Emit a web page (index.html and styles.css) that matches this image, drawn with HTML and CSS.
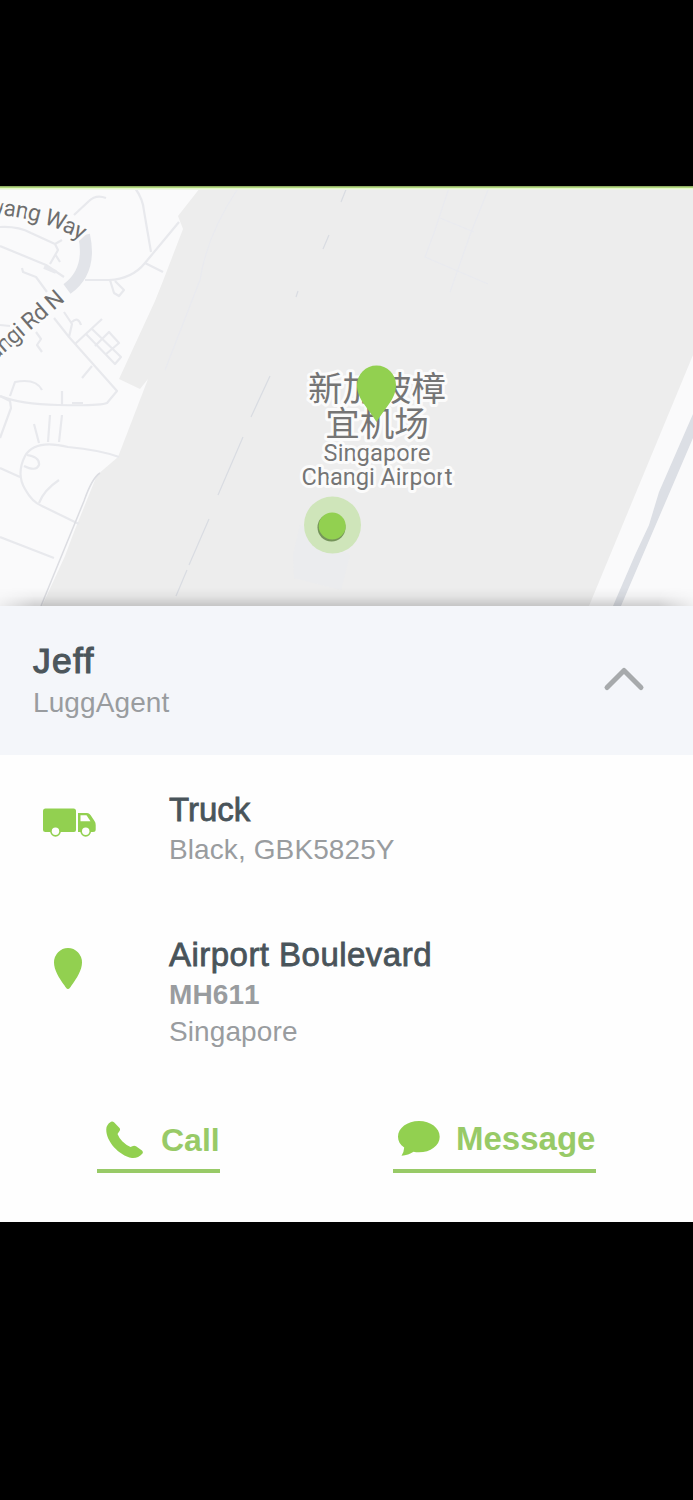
FILE: index.html
```html
<!DOCTYPE html>
<html lang="en">
<head>
<meta charset="utf-8">
<title>LuggAgent</title>
<link rel="stylesheet" href="styles.css">
</head>
<body>
<main class="screen">
  <section class="map">
    <svg class="map-canvas" viewBox="0 186 693 420" width="693" height="420">
      <defs>
        <path id="way" d="M-7 215 Q 44 216 92 247"/>
        <path id="road" d="M-5 361 L 85 283.500"/>
      </defs>
      <rect y="186" width="693" height="420" fill="#fafafb"/>
      <!-- airport grounds -->
      <path d="M200 188 L178 216 L183 229 L163 281 L155 301 L119 379 L140 389 L148 379 L118 457 L97 475 L74 532 L65 556 L42 606 H589 L693 355 V188Z" fill="#ededed"/>
      <g class="road">
        <path d="M0 227 Q18 226 31 233 L55 244 L58 250 L50 264 M0 246 L46 265 L64 277 M55 244 L62 240 M55 254 L60 262 M22 268 L23 272 L36 277 L47 292"/>
        <path d="M74 215 L89 201 Q96 194 106 198 M135 188 Q143 199 144 211 L151 252 M179 222 L145 263 Q132 279 109 280 H85 M145 263 L163 272"/>
        <path d="M110 280 L114 293 L119 296 L124 290 L115 281"/>
        <path d="M54 318 L69 337 L117 391 L107 403 Q100 406 58 405 Q20 404 0 396 M64 312 L72 324 L69 337 M72 322 Q78 316 81 325 M75 344 L102 319 M86 334 L115 364 L121 357 L92 329 M95 346 L109 332 L119 343 L105 355 M92 366 L82 378"/>
        <path d="M36 332 L41 339 L37 345 L42 352 M0 325 L10 326 M10 396 L15 382 Q36 378 42 390 M0 396 L10 401 L11 408 L0 438 M62 391 V405 M72 403 H83"/>
        <path d="M119 457 Q100 450 68 447 Q35 439 25 456 Q16 474 25 489 Q32 502 42 506 L79 524 M39 503 Q44 490 59 480 M27 455 Q40 457 39 465 Q36 472 24 466 M39 443 L34 424 M48 442 L50 415 M59 442 L62 415 M0 468 L20 477 M0 537 L54 558"/>
      </g>
      <path d="M84 235 Q92 271 67 289" class="road-wide"/>
      <path d="M44 267 L56 272" stroke="#e9eaee" stroke-width="4"/>
      <path d="M100 473 Q92 478 84 501 L41 606" fill="none" stroke="#dcdde2" stroke-width="1.5"/>
      <path d="M347 187 L341 202 M329 235 L323 249 M298 291 L296 297 M270 376 L251 417 M243 437 L218 495 M209 519 L189 565 M187 570 L176 596" stroke="#d9dce2" stroke-width="1.2"/>
      <path d="M237 190 Q207 235 200 280 L165 370 M449 188 L434 233 L425 257 L488 284 M488 190 L470 235 L450 292 M440 218 L474 232" fill="none" stroke="#e9eaef" stroke-width="1.2"/>
      <path d="M293 555 L300 525 L350 555 L341 590 L294 578Z" fill="#e9eaf0" opacity=".4"/>
      <path d="M693 414 L659 492 L649 525 L635 555 L613 606 H621 L654 529 L693 438Z" fill="#dcdfe5"/>
      <g class="label street">
        <text><textPath href="#way">yang Way</textPath></text>
        <text><textPath href="#road">angi Rd N</textPath></text>
      </g>
      <g class="label place" text-anchor="middle">
        <text class="cjk" x="377" y="401">新加坡樟</text>
        <text class="cjk" x="377" y="435.500">宜机场</text>
        <text x="377" y="460.500" textLength="107">Singapore</text>
        <text x="377" y="484.500" textLength="151">Changi Airport</text>
      </g>
      <path d="M376.500 422 C373 416 369 411 364 404 C359 397 357 391 357 385 A19.500 19.500 0 0 1 396 385 C396 391 394 397 389 404 C384 411 380 416 376.500 422Z" fill="#92d050"/>
      <circle cx="332.500" cy="525" r="28.500" fill="#cfe5ba"/>
      <circle cx="331.500" cy="527.500" r="14" fill="#75945a"/>
      <circle cx="332.200" cy="526" r="13.500" fill="#92d050"/>
    </svg>
  </section>
  <header class="agent">
    <div>
      <h1 class="name">Jeff</h1>
      <p class="detail">LuggAgent</p>
    </div>
    <svg class="chevron" width="42" height="26" viewBox="0 0 42 26"><path d="M4 21.500 L21 4.500 L38 21.500"/></svg>
  </header>
  <section class="details">
    <div class="row">
      <svg class="icon truck" width="54" height="30" viewBox="0 0 54 30">
        <path d="M2.500 .5 H30.500 Q33 .5 33 3 V22 Q33 24 31 24 H2.500 Q0 24 0 21.500 V3 Q0 .5 2.500 .5Z"/>
        <path d="M35 5 H44 Q46 5 47.500 7 L51.500 13 Q52.700 14.500 52.700 17 V21.500 Q52.700 24 50 24 H35Z"/>
        <path class="hole" d="M37.500 7.300 H43.500 L47.500 13.300 H37.500Z"/>
        <circle cx="12.500" cy="23.300" r="5.400"/><circle cx="42.700" cy="23.300" r="5.400"/>
        <circle class="hole" cx="12.500" cy="23.300" r="3.700"/><circle class="hole" cx="42.700" cy="23.300" r="3.700"/>
      </svg>
      <div>
        <h2 class="title">Truck</h2>
        <p class="detail plate">Black, GBK5825Y</p>
      </div>
    </div>
    <div class="row stop">
      <svg class="icon pin" width="30" height="42" viewBox="0 0 30 42"><path d="M14 41 C12.500 41 11.500 39 10.500 37.500 C5 30 0 22 0 14.500 A14 14.500 0 0 1 28 14.500 C28 22 23 30 17.500 37.500 C16.500 39 15.500 41 14 41Z"/></svg>
      <div>
        <h2 class="title wide">Airport Boulevard</h2>
        <p class="detail strong">MH611</p>
        <p class="detail last">Singapore</p>
      </div>
    </div>
    <nav class="actions">
      <a class="action call">
        <svg class="icon" width="38" height="38" viewBox="0 0 38 38"><path d="M.300 8 C.500 4 3.500 1.500 5 .700 Q6.500 0 8 1.200 L13.500 7 Q14.700 8.500 13.500 10 L11.500 13 Q13 17 16.500 20.500 Q20 24 24.500 26 L27 25 Q28.500 24.300 30 25.300 L36 29.500 Q37.500 31 36.500 32.500 Q32 37.500 26 37 C12 34.500 -.500 19 .300 8Z"/></svg>
        <span>Call</span>
      </a>
      <a class="action message">
        <svg class="icon" width="42" height="36" viewBox="0 0 42 36"><path d="M21 0 C32.500 0 41.700 7 41.700 15.700 C41.700 24.500 32.500 31.300 21 31.300 Q18 31.300 15.500 30.700 Q10.500 34.300 3.500 34.700 Q6 31 6.200 26.500 C2 23.500 0 20 0 15.700 C0 7 9.300 0 21 0Z"/></svg>
        <span>Message</span>
      </a>
    </nav>
  </section>
</main>
</body>
</html>
```
FILE: styles.css
```css
* { box-sizing: border-box; }
body { margin: 0; background: #000; font-family: "Liberation Sans", Arial, sans-serif; }
h1, h2, p { margin: 0; font-weight: 400; }
svg { display: block; flex: none; }
.screen { width: 693px; height: 1500px; padding-top: 186px; }

.map { position: relative; height: 420px; overflow: hidden; }
.map::before {
  content: ""; position: absolute; inset: 0 0 auto; height: 4px;
  background: linear-gradient(#91ad65 0 1px, #b1d67f 1px 2px, #e4f9c9 2px 3px, #eef5e4 3px);
}
.map::after {
  content: ""; position: absolute; inset: auto 0 0; height: 18px;
  background: linear-gradient(transparent, rgba(0,0,0,.04) 45%, rgba(0,0,0,.17));
  -webkit-mask-image: linear-gradient(90deg, rgba(0,0,0,.25), #000 5%, #000 95%, rgba(0,0,0,.25));
}
.road { fill: none; stroke: #e8e9ed; stroke-width: 2.2; stroke-linejoin: round; }
.road-wide { fill: none; stroke: #e2e4e9; stroke-width: 12; }
.label { font-family: Roboto, "Noto Sans CJK SC", sans-serif; fill: #757575; stroke: #fbfbfb; stroke-width: 6px; stroke-linejoin: round; paint-order: stroke; }
.street { font-size: 23px; letter-spacing: -.7px; fill: #6e6e6e; }
.place { font-size: 24px; }
.cjk { font-family: "Noto Sans CJK SC", sans-serif; font-size: 34.5px; }

.agent { display: flex; justify-content: space-between; height: 149px; padding: 34px 48px 0 33px; background: #f4f6fa; }
.name { font-size: 35.5px; line-height: 42px; letter-spacing: 1.3px; color: #4c565b; -webkit-text-stroke: 1.2px #4c565b; }
.detail { font-size: 28px; line-height: 42px; letter-spacing: .1px; color: #999c9f; font-kerning: none; }
.chevron { margin-top: 26px; fill: none; stroke: #a7aaac; stroke-width: 5; stroke-linecap: round; stroke-linejoin: round; }

.details { height: 467px; padding: 35px 0 0; background: #fefefe; }
.row { display: grid; grid-template-columns: 126px 1fr; padding-left: 43px; height: 145px; }
.stop { height: 156px; }
.title { font-size: 33px; line-height: 40px; color: #49545a; -webkit-text-stroke: .8px #49545a; }
.wide { letter-spacing: .47px; }
.plate { line-height: 40px; }
.strong { line-height: 40px; font-weight: 700; }
.last { line-height: 34px; }
.icon { fill: #92d050; }
.hole { fill: #fefefe; }
.truck { margin-top: 18px; }
.pin { margin: 13px 0 0 11px; }
.actions { display: flex; justify-content: space-between; padding: 26px 97px 0; }
.action { display: flex; height: 56px; border-bottom: 4px solid #98ca67; color: #98ca67; font-size: 33px; font-weight: 700; line-height: 40px; }
.call { width: 123px; padding-left: 9px; gap: 17px; }
.call .icon { margin-top: 4px; }
.call span { padding-top: 3px; font-size: 32px; }
.message { width: 203px; padding-left: 5px; gap: 16px; }
.message .icon { margin-top: 4px; }
.message span { padding-top: 2px; }
```
